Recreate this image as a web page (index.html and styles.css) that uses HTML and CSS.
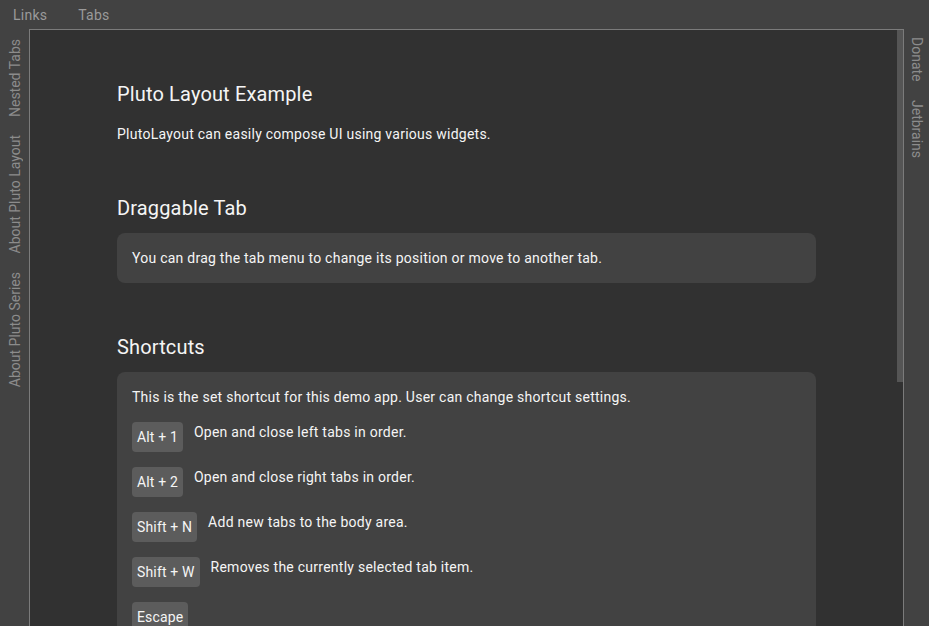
FILE: index.html
```html
<!DOCTYPE html>
<html>
<head>
<meta charset="utf-8">
<link rel="stylesheet" href="styles.css">
</head>
<body>
<div class="app">
  <div class="topbar">
    <span class="top-tab">Links</span>
    <span class="top-tab">Tabs</span>
  </div>
  <div class="middle">
    <div class="side side-left">
      <span class="vtab">Nested Tabs</span>
      <span class="vtab">About Pluto Layout</span>
      <span class="vtab">About Pluto Series</span>
    </div>
    <div class="body">
      <div class="scroll">
        <div class="content">
          <h2 class="title first">Pluto Layout Example</h2>
          <p class="text">PlutoLayout can easily compose UI using various widgets.</p>

          <h2 class="title">Draggable Tab</h2>
          <div class="card">
            <p class="text">You can drag the tab menu to change its position or move to another tab.</p>
          </div>

          <h2 class="title">Shortcuts</h2>
          <div class="card">
            <p class="text">This is the set shortcut for this demo app. User can change shortcut settings.</p>
            <div class="shortcut"><span class="key">Alt + 1</span><span class="desc">Open and close left tabs in order.</span></div>
            <div class="shortcut"><span class="key">Alt + 2</span><span class="desc">Open and close right tabs in order.</span></div>
            <div class="shortcut"><span class="key">Shift + N</span><span class="desc">Add new tabs to the body area.</span></div>
            <div class="shortcut"><span class="key">Shift + W</span><span class="desc">Removes the currently selected tab item.</span></div>
            <div class="shortcut"><span class="key">Escape</span></div>
          </div>
        </div>
      </div>
      <div class="thumb"></div>
    </div>
    <div class="side side-right">
      <span class="vtab">Donate</span>
      <span class="vtab">Jetbrains</span>
    </div>
  </div>
</div>
</body>
</html>
```
FILE: styles.css
```css
html, body {
  margin: 0;
  padding: 0;
  height: 100%;
  overflow: hidden;
  background: #424242;
  font-family: Roboto, "Noto Sans", sans-serif;
}

.app {
  display: flex;
  flex-direction: column;
  height: 626px;
  width: 929px;
}

.topbar {
  height: 29px;
  flex: 0 0 29px;
  display: flex;
  align-items: center;
  gap: 31px;
  padding-left: 13px;
  background: #424242;
}

.top-tab {
  color: #9a9a9a;
  font-size: 14px;
  line-height: 20px;
  letter-spacing: 0.25px;
}

.middle {
  flex: 1;
  display: flex;
  min-height: 0;
}

.side {
  display: flex;
  flex-direction: column;
  align-items: center;
  background: #424242;
}

.side-left {
  width: 29px;
  flex: 0 0 29px;
  padding-top: 10px;
  gap: 18px;
}

.side-right {
  width: 25px;
  flex: 0 0 25px;
  padding-top: 8px;
  gap: 18px;
}

.vtab {
  writing-mode: vertical-rl;
  color: #8c8c8c;
  font-size: 14px;
  line-height: 20px;
}

.side-left .vtab {
  transform: rotate(180deg);
}

.body {
  position: relative;
  flex: 1;
  min-width: 0;
  border-top: 1px solid #7b7b7b;
  border-left: 1px solid #7b7b7b;
  border-right: 1px solid #7b7b7b;
  background: #313131;
  display: flex;
}

.scroll {
  flex: 1;
  overflow: hidden;
}

.thumb {
  position: absolute;
  top: 0;
  right: 0;
  width: 6px;
  height: 352px;
  background: #555555;
}

.content {
  margin-left: 87px;
  width: 699px;
  padding-bottom: 60px;
}

.title {
  margin: 52px 0 13px 0;
  font-size: 20px;
  line-height: 24px;
  font-weight: 400;
  letter-spacing: 0.15px;
  color: #f5f5f5;
}

.title.first {
  margin-top: 52px;
  margin-bottom: 18px;
}

.text {
  margin: 0;
  font-size: 14px;
  line-height: 20px;
  letter-spacing: 0.25px;
  color: #f5f5f5;
}

.card {
  background: #424242;
  border-radius: 8px;
  padding: 15px;
}

.shortcut {
  display: flex;
  align-items: flex-start;
  margin-top: 15px;
}

.key {
  background: #5c5c5c;
  border-radius: 4px;
  padding: 5px;
  font-size: 14px;
  line-height: 20px;
  letter-spacing: 0.15px;
  color: #f5f5f5;
  margin-right: 11px;
  white-space: nowrap;
}

.desc {
  font-size: 14px;
  line-height: 20px;
  letter-spacing: 0.25px;
  color: #f5f5f5;
}
```
